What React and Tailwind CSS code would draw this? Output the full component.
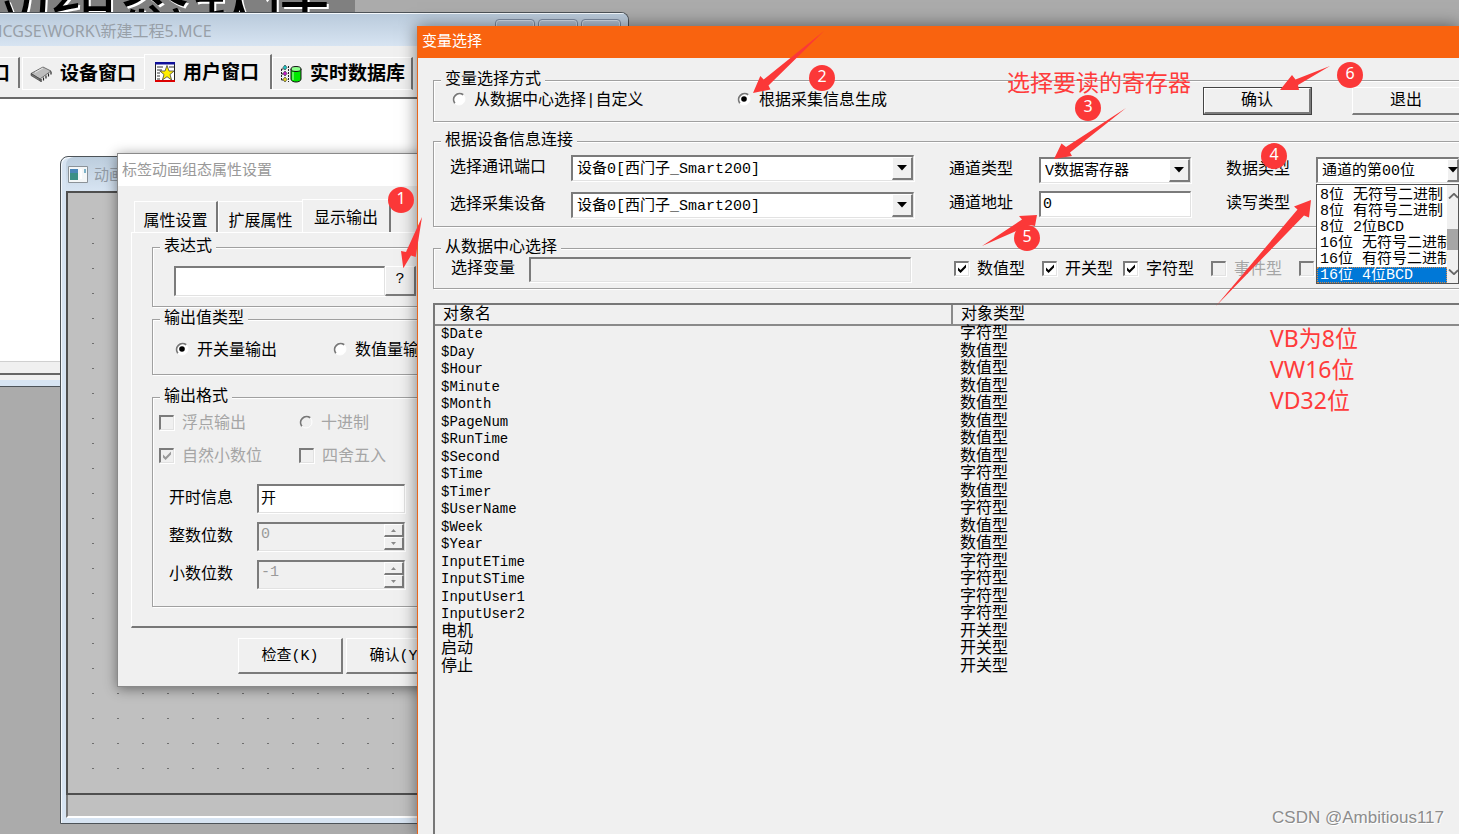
import React from "react";

const VARIABLES = [
  ["$Date", "字符型"],
  ["$Day", "数值型"],
  ["$Hour", "数值型"],
  ["$Minute", "数值型"],
  ["$Month", "数值型"],
  ["$PageNum", "数值型"],
  ["$RunTime", "数值型"],
  ["$Second", "数值型"],
  ["$Time", "字符型"],
  ["$Timer", "数值型"],
  ["$UserName", "字符型"],
  ["$Week", "数值型"],
  ["$Year", "数值型"],
  ["InputETime", "字符型"],
  ["InputSTime", "字符型"],
  ["InputUser1", "字符型"],
  ["InputUser2", "字符型"],
  ["电机", "开关型"],
  ["启动", "开关型"],
  ["停止", "开关型"],
];

const DATA_TYPES = [
  "8位 无符号二进制",
  "8位 有符号二进制",
  "8位 2位BCD",
  "16位 无符号二进制",
  "16位 有符号二进制",
  "16位 4位BCD",
];

const SUNKEN =
  "border-t-2 border-l-2 border-r border-b border-t-[#7b7b7b] border-l-[#7b7b7b] border-r-[#e2e2e2] border-b-[#e2e2e2] shadow-[1px_1px_0_#fff]";
const RAISED =
  "bg-[#f0f0f0] border-t border-l border-r-2 border-b-2 border-t-white border-l-white border-r-[#7b7b7b] border-b-[#7b7b7b]";

/* ---------- shared controls ---------- */

function Group({ title, className = "", children }) {
  return (
    <fieldset
      className={`min-w-0 border border-[#a0a0a0] shadow-[1px_1px_0_#fff,inset_1px_1px_0_#fff] ${className}`}
    >
      <legend className="ml-[7px] bg-[#f0f0f0] px-1 leading-[14px]">{title}</legend>
      {children}
    </fieldset>
  );
}

function Radio({ name, label, checked, disabled, className = "" }) {
  return (
    <label className={`flex items-center gap-2 whitespace-nowrap ${disabled ? "text-[#a5a5a5]" : ""} ${className}`}>
      <span className="relative block h-3.5 w-3.5 shrink-0">
        <input
          type="radio"
          name={name}
          defaultChecked={checked}
          disabled={disabled}
          className="block h-3.5 w-3.5 appearance-none rounded-full"
        />
        <svg viewBox="0 0 14 14" className="pointer-events-none absolute inset-0 h-3.5 w-3.5">
          <circle cx="7" cy="7" r="6" fill={disabled ? "#f0f0f0" : "#fff"} stroke="#fff" />
          <path d="M2.8 11.2A6 6 0 0 1 11.2 2.8" fill="none" stroke="#777" strokeWidth="1.8" />
          {checked && <circle cx="7" cy="7" r="2.8" fill="#000" />}
        </svg>
      </span>
      <span className="pt-1 leading-5">{label}</span>
    </label>
  );
}

function Check({ label, checked, disabled, className = "" }) {
  return (
    <label className={`flex items-center gap-2 whitespace-nowrap ${disabled ? "text-[#a5a5a5]" : ""} ${className}`}>
      <span className="relative block h-[15px] w-[15px] shrink-0">
        <input
          type="checkbox"
          defaultChecked={checked}
          disabled={disabled}
          className={`block h-[15px] w-[15px] appearance-none ${SUNKEN} ${disabled ? "bg-[#f0f0f0]" : "bg-white"}`}
        />
        {checked && (
          <svg viewBox="0 0 15 15" className="pointer-events-none absolute inset-0 h-[15px] w-[15px]">
            <path d="M4 6.5v3L6.6 12 12 6.5v-3L6.6 9z" fill={disabled ? "#9a9a9a" : "#000"} />
          </svg>
        )}
      </span>
      <span className="pt-1 leading-5">{label}</span>
    </label>
  );
}

function Combo({ id, value, className = "", clipped }) {
  return (
    <span className={`relative block h-[26px] ${className}`}>
      <select
        id={id}
        defaultValue={value}
        className={`block h-full w-full appearance-none rounded-none bg-white pt-0.5 pl-1 text-[15px] text-black ${SUNKEN}`}
      >
        <option>{value}</option>
      </select>
      <span
        className={`pointer-events-none absolute top-0.5 bottom-px flex items-center justify-center ${RAISED} ${
          clipped ? "right-0 w-3" : "right-px w-[21px]"
        }`}
      >
        <svg viewBox="0 0 10 6" className="h-1.5 w-2.5 shrink-0">
          <path d="M0 0h10L5 5.5z" fill="#000" />
        </svg>
      </span>
    </span>
  );
}

function Spinner({ id, value }) {
  return (
    <span className={`flex h-[29px] w-[148px] ${SUNKEN}`}>
      <input
        id={id}
        type="text"
        disabled
        defaultValue={value}
        className="min-w-0 flex-1 bg-[#f0f0f0] px-0.5 pb-1 text-[15px] text-[#9a9a9a]"
      />
      <span className="flex w-5 flex-col">
        {["M0 3L2.5 0L5 3z", "M0 0h5L2.5 3z"].map((d, i) => (
          <button
            key={d}
            type="button"
            disabled
            aria-label={i ? "减少" : "增加"}
            className={`flex flex-1 items-center justify-center ${RAISED}`}
          >
            <svg viewBox="0 0 5 3" className="h-[3px] w-[5px]">
              <path d={d} fill="#8a8a8a" />
            </svg>
          </button>
        ))}
      </span>
    </span>
  );
}

/* ---------- workbench window ---------- */

function ChipIcon() {
  return (
    <svg viewBox="0 0 22 18" className="h-[18px] w-[22px] shrink-0">
      <path d="M1 8.500L13 2l8 4-11 8z" fill="#bdbdbd" stroke="#555" strokeWidth=".8" />
      <path d="M1 8.500l9 5.500v2L1 10.500z" fill="#777" stroke="#333" strokeWidth=".6" />
      <path d="M11 14v3M13.500 12.500v3M16 10.500v3M18.500 8.500v3M21 6.500v3" stroke="#222" strokeWidth="1.200" />
      <path d="M5 7.500l8-4.500" stroke="#e6e6e6" />
    </svg>
  );
}

function StarIcon() {
  return (
    <svg viewBox="0 0 20 20" className="h-5 w-5 shrink-0">
      <path d="M.5.500h19v19H.5z" fill="#fff" stroke="#222" />
      <path d="M0 0h20v2.500H0z" fill="#10109a" />
      <path d="M0 19h20" stroke="#d00" strokeWidth="2" />
      <path d="M2 5h6M2 8h5M2 11h3M2 14h3M2 17h3M14 5h5" stroke="#333" />
      <path
        d="M12 3.500l2 5.500h5.200l-4.200 3.500 1.600 5.500-4.600-3.300-4.600 3.300L9 12.500 4.800 9H10z"
        fill="#ffee00"
        stroke="#444"
        strokeWidth=".8"
      />
    </svg>
  );
}

function DatabaseIcon() {
  return (
    <svg viewBox="0 0 22 20" className="h-5 w-[22px] shrink-0">
      <path d="M1.500 5v12M1.500 5h3M1.500 10h3M1.500 16h3M8.500 2v16" fill="none" stroke="#222" strokeDasharray="2 1" />
      <path d="M5 1l2 2.500L5 6 3 3.500z" fill="#19c9c9" stroke="#222" strokeWidth=".6" />
      <path d="M5 7l2 2.500L5 12 3 9.500z" fill="#c719c7" stroke="#222" strokeWidth=".6" />
      <path d="M5 13l2 2.500L5 18l-2-2.500z" fill="#e8d820" stroke="#222" strokeWidth=".6" />
      <path d="M11 5v10c0 4 10 4 10 0V5" fill="#00e800" stroke="#111" />
      <ellipse cx="16" cy="5" rx="5" ry="2.500" fill="#8dff8d" stroke="#111" />
      <path d="M13 8v8" stroke="#b8ffb8" />
    </svg>
  );
}

function Workbench() {
  const tab = "flex items-center gap-2 border-l border-t border-white whitespace-nowrap text-[19px] font-bold";
  return (
    <section className="absolute top-3 left-0 flex h-[375px] w-[629px] flex-col overflow-hidden rounded-tr-lg border-t border-r border-b border-[#4d5358] bg-[#d7e4f2]">
      <header className="flex h-[33px] shrink-0 justify-between bg-linear-to-b from-[#b9cadb] to-[#d7e4f2] shadow-[inset_0_1px_0_#f4f8fc]">
        <h1 className="-ml-3 pt-1.5 text-base leading-6 text-[#98a0a8]">MCGSE\WORK\新建工程5.MCE</h1>
        <div className="flex gap-[3px] pt-1.5 pr-[7px]">
          {["最小化", "最大化", "关闭"].map((name) => (
            <button
              key={name}
              type="button"
              aria-label={name}
              className="h-[22px] w-10 rounded-sm border border-[#7e8da3] bg-[#b4c4d6] shadow-[inset_0_0_0_1px_#d5e0ec]"
            />
          ))}
        </div>
      </header>
      <nav className="flex h-[51px] shrink-0 items-start bg-[#f0f0f0] pt-2">
        <button
          type="button"
          className="mt-[3px] flex h-[31px] w-5 items-center justify-end overflow-hidden border-t border-r-2 border-t-white border-r-[#777] pr-2 text-[19px] font-bold whitespace-nowrap"
        >
          主控窗口
        </button>
        <button type="button" className={`mt-[3px] ml-0.5 h-[33px] w-[122px] border-b pl-[7px] ${tab}`}>
          <ChipIcon />设备窗口
        </button>
        <button type="button" className={`h-[35px] w-32 border-r-2 border-r-[#777] pl-2.5 ${tab}`}>
          <StarIcon />用户窗口
        </button>
        <button type="button" className={`mt-[3px] h-[33px] w-[141px] border-r-2 border-b border-r-[#777] pl-[7px] ${tab}`}>
          <DatabaseIcon />实时数据库
        </button>
      </nav>
      <div className="flex-1 border-t-2 border-[#6a6a6a] bg-white" />
      <div className="h-3 shrink-0 border-t border-[#d0d0d0] bg-[#f0f0f0]" />
      <div className="h-[7px] shrink-0 border-t-2 border-[#666] bg-[#f0f0f0]" />
      <div className="h-1.5 shrink-0 bg-[#d7e4f2]" />
    </section>
  );
}

/* ---------- animation canvas window ---------- */

function CanvasWindow() {
  return (
    <section className="absolute top-[156px] bottom-2.5 left-[60px] flex w-[600px] flex-col rounded-tl-lg border border-[#4d5358] bg-[#d7e4f2] pl-[5px] shadow-[inset_1px_1px_0_#f4f8fc]">
      <header className="flex h-[34px] shrink-0 items-center gap-1.5 rounded-tl-lg bg-linear-to-b from-[#bccddd] to-[#d7e4f2] pl-0.5">
        <svg viewBox="0 0 20 17" className="h-[17px] w-5">
          <path d="M.5.500h19v16H.5z" fill="#f4f7f8" stroke="#8b9298" />
          <path d="M2 3h8v11H2z" fill="#3b8f86" />
          <path d="M2 3h8v4H2z" fill="#4a86b8" />
          <path d="M12 3h2v10h-2z" fill="#fff" />
          <path d="M16 3h2v4h-2z" fill="#7fb3c9" />
        </svg>
        <h2 className="text-[15px] text-[#929ba5]">动画</h2>
      </header>
      <div className="flex-1 border-2 border-[#4f4f4f] bg-[#c0c0c0]">
        <svg className="block h-full w-full">
          <defs>
            <pattern id="grid-dots" x="24" y="25" width="25" height="25" patternUnits="userSpaceOnUse">
              <path d="M0 0h2v1H0z" fill="#6e6e6e" />
            </pattern>
          </defs>
          <rect x="20" y="20" width="100%" height="96%" fill="url(#grid-dots)" />
        </svg>
      </div>
      <div className="h-[23px] shrink-0 border-b-2 border-l-2 border-b-white border-l-[#777] bg-[#c0c0c0]" />
      <div className="h-[5px] shrink-0" />
    </section>
  );
}

/* ---------- label properties dialog ---------- */

function LabelDialog() {
  return (
    <section className="absolute top-[153px] left-[117px] w-[420px] border border-[#8a8a8a] bg-[#f0f0f0] text-base shadow-[0_2px_12px_rgba(0,0,0,0.45)]">
      <header className="h-8 bg-white pl-1 text-[15px] leading-9 text-[#999]">标签动画组态属性设置</header>
      <div className="pt-[13px] pl-[13px]">
        <div className="flex h-[33px] items-end pl-[3px]">
          <button
            type="button"
            className="h-[31px] w-[84px] border-t border-l border-r-2 border-t-white border-l-white border-r-[#777] pt-2"
          >
            属性设置
          </button>
          <button type="button" className="h-[31px] w-[84px] border-t border-l border-white pt-2">
            扩展属性
          </button>
          <button
            type="button"
            className="h-[33px] w-[89px] border-t border-l border-r-2 border-t-white border-l-white border-r-[#777] pt-1.5"
          >
            显示输出
          </button>
        </div>
        <div className="h-[396px] border-t border-b-2 border-l border-t-white border-b-[#777] border-l-white pt-[7px] pl-5">
          <Group title="表达式">
            <div className="flex h-[52px] items-start pt-3 pl-[21px]">
              <input type="text" aria-label="表达式" className={`h-[30px] w-[211px] bg-white ${SUNKEN}`} />
              <button type="button" className={`h-[30px] w-[31px] text-[15px] ${RAISED}`}>
                ?
              </button>
            </div>
          </Group>
          <Group title="输出值类型" className="mt-[5px]">
            <div className="flex h-12 items-center gap-14 pb-0.5 pl-[22px]">
              <Radio name="value-kind" label="开关量输出" checked />
              <Radio name="value-kind" label="数值量输出" />
            </div>
          </Group>
          <Group title="输出格式" className="mt-[15px]">
            <div className="flex h-[202px] flex-col pt-1.5 pl-1.5">
              <div className="grid grid-cols-[140px_1fr] gap-y-[9px]">
                <Check label="浮点输出" disabled />
                <Radio name="radix" label="十进制" disabled />
                <Check label="自然小数位" checked disabled />
                <Check label="四舍五入" disabled />
              </div>
              <div className="mt-[17px] grid grid-cols-[88px_1fr] items-center gap-y-[9px] pl-2.5">
                <label htmlFor="on-text">开时信息</label>
                <input
                  id="on-text"
                  type="text"
                  defaultValue="开"
                  className={`h-[29px] w-[148px] bg-white px-0.5 pb-1 text-[15px] ${SUNKEN}`}
                />
                <label htmlFor="int-digits">整数位数</label>
                <Spinner id="int-digits" value="0" />
                <label htmlFor="frac-digits">小数位数</label>
                <Spinner id="frac-digits" value="-1" />
              </div>
            </div>
          </Group>
        </div>
        <div className="flex gap-[3px] pt-2.5 pb-3 pl-[107px] text-[15px]">
          <button type="button" className={`h-9 w-[105px] pt-1 ${RAISED}`}>
            检查(K)
          </button>
          <button type="button" className={`h-9 w-[105px] pt-1 ${RAISED}`}>
            确认(Y)
          </button>
        </div>
      </div>
    </section>
  );
}

/* ---------- variable selection dialog ---------- */

function TypeList() {
  return (
    <div className="absolute top-[27px] left-0 z-10 flex w-full border border-[#555] bg-white text-[15px]">
      <ul role="listbox" aria-label="数据类型选项" className="min-w-0 flex-1 overflow-hidden pt-0.5">
        {DATA_TYPES.map((t, i) => (
          <li
            key={t}
            role="option"
            aria-selected={i === 5}
            className={`h-4 overflow-hidden pl-[3px] leading-[17px] whitespace-nowrap ${
              i === 5 ? "bg-[#0078d7] text-white outline-1 -outline-offset-1 outline-[#d98a4a] outline-dotted" : ""
            }`}
          >
            {t}
          </li>
        ))}
      </ul>
      <div className="flex w-[11px] flex-col items-center justify-between overflow-hidden bg-[#f0f0f0] py-2">
        <svg viewBox="0 0 10 6" className="h-1.5 w-2.5">
          <path d="M1 5.500L6 .8l4 4" fill="none" stroke="#666" strokeWidth="1.800" />
        </svg>
        <span className="mt-2.5 h-[21px] w-full bg-[#a6a6a6]" />
        <svg viewBox="0 0 10 6" className="h-1.5 w-2.5">
          <path d="M1 .5l5 4.700 4-4" fill="none" stroke="#666" strokeWidth="1.800" />
        </svg>
      </div>
    </div>
  );
}

function VariableDialog() {
  return (
    <section className="absolute top-[26px] right-0 bottom-0 left-[417px] flex flex-col overflow-hidden border-l border-[#e8661c] bg-[#f0f0f0] text-base">
      <header className="h-8 shrink-0 bg-[#f9630f] pl-1 text-[15px] leading-[34px] text-white">变量选择</header>
      <div className="flex flex-1 flex-col pt-[15px] pl-[15px]">
        <Group title="变量选择方式" className="border-r-0">
          <div className="flex h-[34px] items-start pl-[18px]">
            <Radio name="mode" label="从数据中心选择|自定义" className="h-6 w-[285px]" />
            <Radio name="mode" label="根据采集信息生成" checked className="h-6 w-[466px]" />
            <button type="button" className="h-7 w-[109px] border border-[#444]">
              <span className={`flex h-full items-center justify-center ${RAISED}`}>确认</span>
            </button>
            <button type="button" className={`ml-10 h-7 min-w-[107px] flex-1 border-r-0! ${RAISED}`}>
              退出
            </button>
          </div>
        </Group>

        <Group title="根据设备信息连接" className="mt-3 border-r-0">
          <div className="flex h-[78px] pl-4">
            <div className="grid w-[499px] grid-cols-[121px_343px] content-start items-center gap-y-[11px] pt-[7px]">
              <label htmlFor="port">选择通讯端口</label>
              <Combo id="port" value="设备0[西门子_Smart200]" />
              <label htmlFor="device">选择采集设备</label>
              <Combo id="device" value="设备0[西门子_Smart200]" />
            </div>
            <div className="grid w-[277px] grid-cols-[90px_152px] content-start items-center gap-y-2 pt-[9px]">
              <label htmlFor="channel-type">通道类型</label>
              <Combo id="channel-type" value="V数据寄存器" />
              <label htmlFor="channel-address">通道地址</label>
              <input
                id="channel-address"
                type="text"
                defaultValue="0"
                className={`h-[26px] bg-white px-0.5 text-[15px] ${SUNKEN}`}
              />
            </div>
            <div className="grid flex-1 grid-cols-[90px_1fr] content-start items-center gap-y-2 pt-[9px]">
              <label htmlFor="data-type">数据类型</label>
              <div className="relative">
                <Combo id="data-type" value="通道的第00位" clipped />
                <TypeList />
              </div>
              <span className="h-[26px] leading-[26px]">读写类型</span>
            </div>
          </div>
        </Group>

        <Group title="从数据中心选择" className="mt-3.5 border-r-0">
          <div className="flex h-[33px] items-start overflow-hidden pl-[17px]">
            <label htmlFor="variable" className="w-[78px] leading-7">
              选择变量
            </label>
            <input id="variable" type="text" disabled className={`mt-0.5 h-[25px] w-[382px] bg-[#f0f0f0] ${SUNKEN}`} />
            <div className="ml-[43px] flex h-[26px] shrink-0">
              <Check label="数值型" checked className="w-[88px]" />
              <Check label="开关型" checked className="w-[81px]" />
              <Check label="字符型" checked className="w-[88px]" />
              <Check label="事件型" disabled className="w-[88px]" />
              <Check label="" disabled />
            </div>
          </div>
        </Group>

        <div className="mt-3.5 flex-1 border-t-2 border-l-2 border-[#777]">
          <table className="w-full table-fixed border-collapse text-left">
            <thead>
              <tr className="h-5 border-b-2 border-[#8a8a8a] leading-[18px]">
                <th className="w-[517px] border-r-2 border-[#8a8a8a] py-0 pl-2 font-normal">对象名</th>
                <th className="border-l border-l-white py-0 pl-2 font-normal">对象类型</th>
              </tr>
            </thead>
            <tbody>
              {VARIABLES.map(([name, type], i) => (
                <tr key={name} className="leading-[17px] odd:h-[17px] even:h-[18px]">
                  <td className={`py-0 pl-1.5 ${i < 17 ? "text-sm leading-[17px]" : ""}`}>{name}</td>
                  <td className="py-0 pl-2">{type}</td>
                </tr>
              ))}
            </tbody>
          </table>
        </div>
      </div>
    </section>
  );
}

/* ---------- annotations ---------- */

const ARROWS = [
  "422,217 415.700,257 411,255.500 403.300,268.300 401,251 406,252",
  "824,31 768.500,85.500 770.500,89.500 753,93 760.300,76 763.700,79.500",
  "1126,108 1070,152.500 1072,156 1054,159 1061.500,143.500 1066,147",
  "1216,306 1304,215.500 1309,217.500 1311,200 1294,206.500 1297.500,209.500",
  "982,246 1030,225 1035,226 1037,215 1019,216 1022,219.500",
  "1330,66 1298,85 1299,90 1280,90 1292,75 1295.500,79.500",
];

function Marker({ n, className }) {
  return (
    <span
      className={`absolute flex h-[26px] w-[26px] items-center justify-center rounded-full bg-[#fb3838] pb-1 text-base leading-none text-white ${className}`}
    >
      {n}
    </span>
  );
}

function Annotations() {
  return (
    <div className="pointer-events-none absolute inset-0 font-['Noto_Sans','Noto_Sans_CJK_SC',sans-serif] text-[#ff3b3b]">
      <svg className="absolute inset-0 h-full w-full">
        {ARROWS.map((points) => (
          <polygon key={points} points={points} fill="#fb3838" />
        ))}
      </svg>
      <Marker n="1" className="top-[187px] left-[388px]" />
      <Marker n="2" className="top-[65px] left-[809px]" />
      <Marker n="3" className="top-[95px] left-[1075px]" />
      <Marker n="4" className="top-[143px] left-[1261px]" />
      <Marker n="5" className="top-[225px] left-[1014px]" />
      <Marker n="6" className="top-[62px] left-[1337px]" />
      <p className="absolute top-[66px] left-[1007px] text-[23px] leading-8 whitespace-nowrap">选择要读的寄存器</p>
      <p className="absolute top-[323px] left-[1270px] text-[23px] leading-[31px] whitespace-nowrap">
        VB为8位
        <br />
        VW16位
        <br />
        VD32位
      </p>
      <p className="absolute right-[15px] bottom-1 font-['Liberation_Sans',sans-serif] text-[17px] leading-6 text-[#8c8c8c] [text-shadow:1px_1px_0_#fff]">
        CSDN @Ambitious117
      </p>
    </div>
  );
}

export default function App() {
  return (
    <main className="relative h-screen min-h-[700px] overflow-hidden bg-[#ababab] font-['Liberation_Mono','Noto_Sans_CJK_SC',monospace] text-black">
      <div className="absolute top-0 left-0 h-20 w-[355px] overflow-hidden bg-[#808080]">
        <p className="-mt-8 -ml-5 text-[70px] leading-[80px] whitespace-nowrap [text-shadow:2px_2px_0_#fff]">
          动组态软件
        </p>
      </div>
      <div className="font-['Noto_Sans','Noto_Sans_CJK_SC',sans-serif]">
        <Workbench />
        <CanvasWindow />
      </div>
      <LabelDialog />
      <div className="absolute top-[26px] right-0 bottom-0 left-[417px] shadow-[0_0_16px_rgba(0,0,0,0.5)]" />
      <VariableDialog />
      <Annotations />
    </main>
  );
}
